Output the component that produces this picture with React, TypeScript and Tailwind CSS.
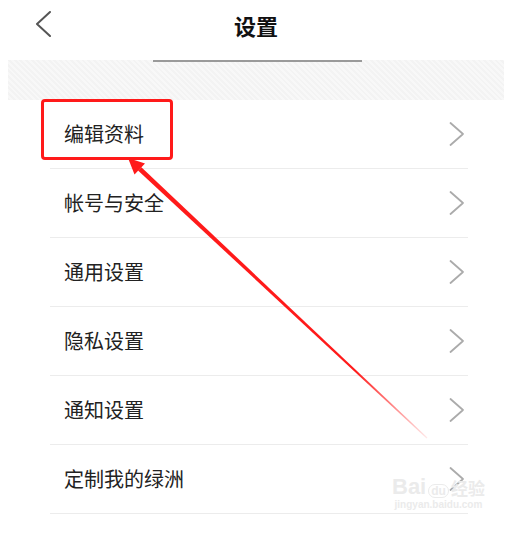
const rows = ["编辑资料", "帐号与安全", "通用设置", "隐私设置", "通知设置", "定制我的绿洲"];

function Chevron({ left }: { left?: boolean }) {
  return (
    <svg width="16" height="26" viewBox="0 0 16 26" fill="none">
      <polyline
        points={left ? "15,1 2,13 15,25" : "1.5,2 14,13 1.5,24"}
        stroke={left ? "#555" : "#ababab"}
        strokeWidth={left ? 2 : 1.8}
        strokeLinecap="round"
        strokeLinejoin="round"
      />
    </svg>
  );
}

export default function App() {
  return (
    <div className="relative w-[512px] h-[534px] overflow-hidden bg-white font-['Noto_Sans_CJK_SC','Noto_Sans',sans-serif] text-[#222]">
      {/* Header */}
      <div className="relative flex h-[58px] items-start justify-center pt-[8px]">
        <div className="absolute left-[35px] top-[11px]">
          <Chevron left />
        </div>
        <span className="text-[22px] font-bold leading-[34px] text-[#111]">设置</span>
      </div>

      {/* Hatched band */}
      <div className="mx-[8px] h-[40px] bg-[repeating-linear-gradient(45deg,#f3f3f3_0px,#f3f3f3_2px,#f8f8f8_2px,#f8f8f8_4px)]">
        <div className="ml-[145px] w-[209px] h-[2px] bg-[#9a9a9a] mt-[2px]" />
      </div>

      {/* List */}
      <div className="ml-[50px] w-[418px]">
        {rows.map((r) => (
          <div key={r} className="flex h-[69px] items-center justify-between border-b border-[#ececec] pl-[14px] pr-[3px]">
            <span className="text-[20px] leading-none">{r}</span>
            <Chevron />
          </div>
        ))}
      </div>

      {/* Red highlight box */}
      <div className="absolute left-[41px] top-[99px] h-[61px] w-[132px] rounded-[4px] border-[3px] border-[#ff1a1a]" />

      {/* Arrow annotation */}
      <svg className="absolute left-0 top-0" width="512" height="534" viewBox="0 0 512 534">
        <defs>
          <linearGradient id="fade" gradientUnits="userSpaceOnUse" x1="140" y1="169" x2="427" y2="438">
            <stop offset="0" stopColor="#ff1a1a" stopOpacity="1" />
            <stop offset="0.75" stopColor="#ff1a1a" stopOpacity="1" />
            <stop offset="1" stopColor="#ff1a1a" stopOpacity="0.1" />
          </linearGradient>
        </defs>
        <polygon points="141.4,167.2 138.0,170.6 426.6,438.4 427.4,437.6" fill="url(#fade)" />
        <polygon points="128,158 145,163.5 134.5,174.5" fill="#ff1a1a" />
      </svg>

      {/* Watermark */}
      <div className="absolute left-[392px] top-[476px] flex flex-col items-center text-[#ebebeb] font-['Liberation_Sans','Noto_Sans_CJK_SC',sans-serif]">
        <div className="flex items-end gap-[2px] leading-none">
          <span className="text-[22px] font-bold">Bai</span>
          <span className="rounded-full border border-[#ebebeb] px-[2px] text-[12px] font-bold">du</span>
          <span className="text-[17px] font-bold">经验</span>
        </div>
        <span className="mt-[2px] text-[10px] font-bold leading-none">jingyan.baidu.com</span>
      </div>
    </div>
  );
}
